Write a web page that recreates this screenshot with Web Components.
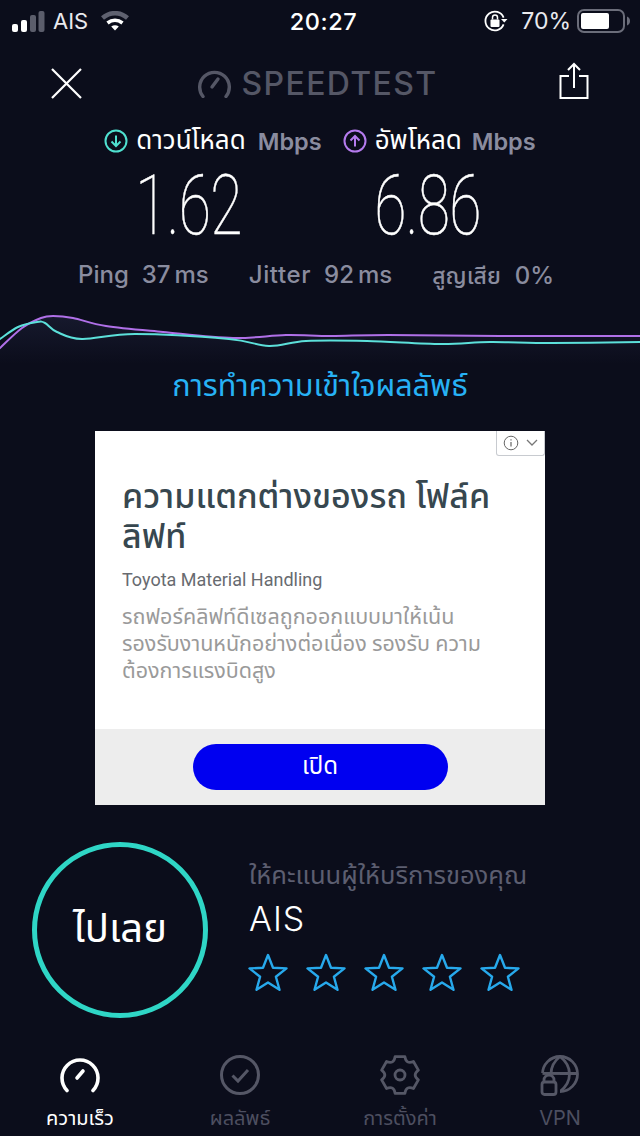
<!DOCTYPE html>
<html lang="th">
<head>
<meta charset="utf-8">
<title>Speedtest</title>
<style>
  html, body { margin: 0; padding: 0; background: #0b0d1b; }
  body { width: 640px; height: 1136px; overflow: hidden; font-family: Inter, "Noto Sans", "Noto Sans Thai", sans-serif; }
</style>
</head>
<body>
<speed-app>
  <status-bar></status-bar>
  <top-bar></top-bar>
  <speed-results></speed-results>
  <speed-graph></speed-graph>
  <result-link>การทำความเข้าใจผลลัพธ์</result-link>
  <ad-card></ad-card>
  <rate-panel></rate-panel>
  <tab-bar></tab-bar>
</speed-app>
<script>
const SANS = `Inter, "Noto Sans", "Noto Sans Thai", sans-serif`;

function define(name, html) {
  customElements.define(name, class extends HTMLElement {
    constructor() {
      super();
      this.attachShadow({ mode: "open" });
      this.shadowRoot.innerHTML = html;
    }
  });
}

// six lobes, concave valleys
function gearPath(cx, cy, r, valley) {
  const pt = (deg, rad) => {
    const a = deg * Math.PI / 180;
    return `${(cx + rad * Math.cos(a)).toFixed(2)} ${(cy + rad * Math.sin(a)).toFixed(2)}`;
  };
  let d = "";
  for (let i = 0; i < 6; i++) {
    const c = i * 60 - 90;
    d += `${i ? "L" : "M"}${pt(c - 15, r)} L${pt(c + 15, r)} Q${pt(c + 30, valley)} ${pt(c + 45, r)} `;
  }
  return d + "Z";
}

define("speed-app", `
  <style>:host { display: block; width: 640px; color: #fff; font-family: ${SANS}; }</style>
  <slot></slot>`);

define("status-bar", `
  <style>
    :host { display: grid; grid-template-columns: 1fr auto 1fr; align-items: center; height: 42px; padding: 0 10px 0 12px; font-size: 22px; color: #e9e9ee; }
    .l, .r { display: flex; align-items: center; }
    .r { justify-content: flex-end; }
    .t { margin-left: 5px; font-size: 23.5px; font-weight: 500; color: #fff; letter-spacing: .6px; }
    svg { display: block; }
  </style>
  <div class="l">
    <svg width="33" height="21" viewBox="0 0 33 21">
      <rect x="0" y="13" width="6" height="8" rx="2" fill="#fff"/>
      <rect x="9" y="9" width="6" height="12" rx="2" fill="#fff"/>
      <rect x="18" y="4" width="6" height="17" rx="2" fill="#5b5d6b"/>
      <rect x="26.500" y="0" width="6" height="21" rx="2" fill="#5b5d6b"/>
    </svg>
    <span style="margin-left:8px">AIS</span>
    <svg style="margin-left:13px" width="28" height="20" viewBox="0 0 28 20" fill="none">
      <path d="M1.500 7C9 .5 19 .5 26.500 7" stroke="#5f6170" stroke-width="4.500"/>
      <path d="M6.500 12C11 8.500 17 8.500 21.500 12" stroke="#fff" stroke-width="3.600"/>
      <path d="M14 19.500l-3.800-4C12.500 13.800 15.500 13.800 17.800 15.500z" fill="#fff"/>
    </svg>
  </div>
  <div class="t">20:27</div>
  <div class="r">
    <svg width="24" height="24" viewBox="0 0 24 24" fill="none">
      <path d="M19.600 15.400A9.400 9.400 0 1 1 19.600 8.600" stroke="#fff" stroke-width="1.800"/>
      <path d="M17 10h6.500l-3.200 3.500z" fill="#fff"/>
      <rect x="6.500" y="10.500" width="9" height="7.500" rx="1" fill="#fff"/>
      <path d="M8.500 10.500V8.500a2.500 2.500 0 0 1 5 0v2" stroke="#fff" stroke-width="1.500"/>
    </svg>
    <span style="margin-left:13px;font-size:23px">70%</span>
    <svg style="margin-left:6px" width="53" height="24" viewBox="0 0 53 24" fill="none">
      <rect x="1" y="1" width="46" height="22" rx="6" stroke="#6b6d7a" stroke-width="2"/>
      <rect x="4" y="4" width="28" height="16" rx="2" fill="#fff"/>
      <path d="M50 7.500c2 .8 3 2.400 3 4.500s-1 3.700-3 4.500z" fill="#6b6d7a"/>
    </svg>
  </div>`);

define("top-bar", `
  <style>
    :host { display: grid; grid-template-columns: 1fr auto 1fr; align-items: center; height: 74px; padding: 4px 51px 0 50px; }
    .logo { display: flex; align-items: center; gap: 11px; margin-left: -4px; color: #555766; font-size: 32px; font-weight: 500; letter-spacing: 1.35px; }
    svg { display: block; }
    .share { justify-self: end; margin-top: -4px; }
  </style>
  <svg width="32" height="32" viewBox="0 0 32 32" fill="none" stroke="#fff" stroke-width="2.200"><path d="M2 2L31 31M31 2L2 31"/></svg>
  <div class="logo">
    <svg width="33" height="30" viewBox="0 0 33 30" fill="none" stroke="#555766" stroke-width="3.400" stroke-linecap="round">
      <path d="M5 28.500A14.800 14.800 0 1 1 28 28.500"/><path d="M14 19l6-8"/>
    </svg>
    <span>SPEEDTEST</span>
  </div>
  <svg class="share" width="30" height="38" viewBox="0 0 30 38" fill="none" stroke="#fff" stroke-width="2">
    <path d="M15 26V2M9 8l6-6 6 6"/><path d="M10 14H1.500V36H28.500V14H20"/>
  </svg>`);

define("speed-results", `
  <style>
    :host { display: block; height: 180px; }
    .head { display: flex; justify-content: center; align-items: center; height: 42px; font-size: 26px; white-space: nowrap; }
    .head svg { margin-right: 8px; }
    .head span { color: #8a8c9f; font-weight: 600; margin: 0 21px 0 12px; font-size: 23.5px; }
    .head span:last-child { margin: 0 0 0 10px; }
    .cols { display: flex; padding-left: 69px; }
    .num { width: 239px; text-align: center; font-family: Roboto, sans-serif; font-weight: 100; font-size: 84px; line-height: 86px; height: 86px; margin-top: 1px; transform: scaleX(.7); -webkit-text-stroke: .5px #fff; color: #fff; letter-spacing: -1px; }
    .stats { display: flex; gap: 40px; padding-left: 78px; margin-top: 11px; font-size: 24px; color: #8a8c9f; font-weight: 500; white-space: nowrap; }
    .stats b { font-weight: 500; margin-left: 13px; }
    .stats i { font-style: normal; margin-left: 4px; }
    .stats .j { letter-spacing: .6px; }
    .stats .th { font-size: 23px; }
    .stats .th b { font-size: 24px; margin-left: 14px; }
    svg { display: block; }
  </style>
  <div class="head">
    <svg width="24" height="24" viewBox="0 0 24 24" fill="none" stroke="#4fe0d0" stroke-width="2"><circle cx="12" cy="12" r="10.500"/><path d="M12 6.500V17M7.500 12.500L12 17l4.500-4.500"/></svg>ดาวน์โหลด<span>Mbps</span>
    <svg width="24" height="24" viewBox="0 0 24 24" fill="none" stroke="#b57bee" stroke-width="2"><circle cx="12" cy="12" r="10.500"/><path d="M12 17.500V7M7.500 11.500L12 7l4.500 4.500"/></svg>อัพโหลด<span>Mbps</span>
  </div>
  <div class="cols">
    <div class="num">1.62</div>
    <div class="num">6.86</div>
  </div>
  <div class="stats">
    <div>Ping<b>37</b><i>ms</i></div>
    <div><span class="j">Jitter</span><b>92</b><i>ms</i></div>
    <div class="th">สูญเสีย<b>0%</b></div>
  </div>`);

customElements.define("speed-graph", class extends HTMLElement {
  constructor() {
    super();
    this.attachShadow({ mode: "open" });
    const purple = [[-5,353],[0,348],[22,328],[41,318],[53,316],[73,318],[106,326],[163,332],[233,338],[286,335],[331,336],[388,335],[500,336],[640,336]];
    const teal = [[-5,342],[0,339],[18,327],[37,322],[45,323],[57,332],[82,339],[135,334],[229,339],[269,346],[306,341],[367,341],[441,344],[490,342],[551,343],[640,342]];
    const off = 300;
    this.shadowRoot.innerHTML = `
      <style>
        :host { display: block; height: 64px; }
        svg { display: block; }
      </style>
      <svg width="640" height="64" viewBox="0 ${off} 640 64" fill="none">
        <defs>
          <linearGradient id="g" x1="0" y1="0" x2="0" y2="1">
            <stop offset="0" stop-color="#1a1d33" stop-opacity=".75"/>
            <stop offset="1" stop-color="#1a1d33" stop-opacity="0"/>
          </linearGradient>
        </defs>
        <path d="${this.smooth(purple)} L640 364 L0 364Z" fill="url(#g)"/>
        <path d="${this.smooth(purple)}" stroke="#b070e8" stroke-width="2"/>
        <path d="${this.smooth(teal)}" stroke="#5ce0da" stroke-width="2"/>
      </svg>`;
  }

  // catmull-rom through the sampled points
  smooth(p) {
    let d = `M${p[0][0]} ${p[0][1]}`;
    for (let i = 0; i < p.length - 1; i++) {
      const a = p[i - 1] || p[i], b = p[i], c = p[i + 1], e = p[i + 2] || c;
      const c1 = [b[0] + (c[0] - a[0]) / 6, b[1] + (c[1] - a[1]) / 6];
      const c2 = [c[0] - (e[0] - b[0]) / 6, c[1] - (e[1] - b[1]) / 6];
      d += ` C${c1[0]} ${c1[1]} ${c2[0]} ${c2[1]} ${c[0]} ${c[1]}`;
    }
    return d;
  }
});

define("result-link", `
  <style>:host { display: block; height: 67px; line-height: 41px; text-align: center; font-size: 30.500px; color: #27b2f5; white-space: nowrap; }</style>
  <slot></slot>`);

define("ad-card", `
  <style>
    :host { display: flex; flex-direction: column; position: relative; width: 450px; height: 374px; margin: 0 auto 37px; background: #fff; font-family: Roboto, "Noto Sans", "Noto Sans Thai", sans-serif; }
    .body { flex: 1; padding: 45px 27px 0; }
    h2 { margin: 0; font-size: 34px; line-height: 40px; font-weight: 500; color: #37474f; white-space: nowrap; }
    .by { margin-top: 12px; font-size: 18px; line-height: 24px; color: #686b70; }
    p { margin: 11px 0 0; font-size: 21.500px; line-height: 27px; color: #9a9a9a; white-space: nowrap; }
    .foot { display: flex; justify-content: center; align-items: center; height: 76px; background: #ededed; }
    .btn { display: flex; align-items: center; justify-content: center; width: 255px; height: 46px; border-radius: 23px; background: #0000f0; color: #fff; font-size: 24px; }
    .info { position: absolute; top: 0; right: 0; display: flex; align-items: center; gap: 7px; box-sizing: border-box; width: 49px; height: 25px; padding-left: 6px; border: 1px solid #c8cbd0; border-top: 0; border-radius: 0 0 3px 3px; background: #fff; }
    svg { display: block; }
  </style>
  <div class="body">
    <h2>ความแตกต่างของรถ โฟล์ค<br>ลิฟท์</h2>
    <div class="by">Toyota Material Handling</div>
    <p>รถฟอร์คลิฟท์ดีเซลถูกออกแบบมาให้เน้น<br>รองรับงานหนักอย่างต่อเนื่อง รองรับ ความ<br>ต้องการแรงบิดสูง</p>
  </div>
  <div class="foot"><div class="btn">เปิด</div></div>
  <div class="info">
    <svg width="16" height="16" viewBox="0 0 16 16" fill="none" stroke="#666"><circle cx="8" cy="8" r="6.800"/><path d="M8 7v4.500M8 4.300v1.200" stroke-width="1.200"/></svg>
    <svg width="12" height="8" viewBox="0 0 12 8" fill="none" stroke="#777" stroke-width="1.300"><path d="M1 1l5 5 5-5"/></svg>
  </div>`);

define("rate-panel", `
  <style>
    :host { display: grid; grid-template-columns: 176px 1fr; column-gap: 41px; height: 176px; padding-left: 32px; align-items: start; }
    .go { box-sizing: border-box; width: 176px; height: 176px; border: 5px solid #2fd6c6; border-radius: 50%; display: flex; align-items: center; justify-content: center; font-size: 40px; color: #fff; }
    .title { margin-top: 17px; font-size: 25.500px; line-height: 32px; color: #5c5e70; white-space: nowrap; }
    .isp { margin-top: 8px; font-size: 34px; line-height: 40px; color: #fff; font-weight: 300; letter-spacing: 1px; }
    .stars { display: flex; gap: 18px; margin-top: 14px; margin-left: -1px; }
    svg { display: block; }
  </style>
  <div class="go">ไปเลย</div>
  <div>
    <div class="title">ให้คะแนนผู้ให้บริการของคุณ</div>
    <div class="isp">AIS</div>
    <div class="stars">${`<svg width="40" height="38" viewBox="0 0 40 38" fill="none" stroke="#27a9ec" stroke-width="2.400" stroke-linejoin="round"><path d="M20 2l5 12.800 13.500.6-10.600 8.400 3.600 13-11.500-7.400-11.500 7.400 3.600-13L1.500 15.400l13.500-.6z"/></svg>`.repeat(5)}</div>
  </div>`);

define("tab-bar", `
  <style>
    :host { display: grid; grid-template-columns: repeat(4, 160px); margin-top: 35px; height: 83px; font-size: 20px; color: #4d4f60; text-align: center; }
    .tab { display: flex; flex-direction: column; align-items: center; white-space: nowrap; }
    .tab.on { color: #fff; }
    .ic { height: 44px; display: flex; align-items: center; }
    .lb { margin-top: 8px; line-height: 26px; }
    svg { display: block; }
  </style>
  <div class="tab on">
    <div class="ic"><svg width="40" height="36" viewBox="0 0 40 36" fill="none" stroke="#fff" stroke-width="3.600" stroke-linecap="round"><path d="M7 33.500A18 18 0 1 1 33 33.500"/><path d="M17 21l6-7"/></svg></div>
    <div class="lb">ความเร็ว</div>
  </div>
  <div class="tab">
    <div class="ic"><svg width="40" height="40" viewBox="0 0 40 40" fill="none" stroke="#555766" stroke-width="3"><circle cx="20" cy="20" r="18.500"/><path d="M12.500 20.500l5.500 5.500 10-11"/></svg></div>
    <div class="lb">ผลลัพธ์</div>
  </div>
  <div class="tab">
    <div class="ic"><svg width="40" height="42" viewBox="0 0 40 42" fill="none" stroke="#555766" stroke-width="2.800" stroke-linejoin="round"><path d="${gearPath(20, 21, 19, 12)}"/><circle cx="20" cy="21" r="5"/></svg></div>
    <div class="lb">การตั้งค่า</div>
  </div>
  <div class="tab">
    <div class="ic"><svg width="40" height="42" viewBox="0 0 40 42" fill="none" stroke="#555766" stroke-width="2.800"><circle cx="20" cy="20" r="17.500"/><path d="M2.500 19.500H37.500M20 2.500C13 8 11 14 11 20M20 2.500C27 8 29.500 14 29.500 20C29.500 27 26 33 20 37.500"/><rect x="-2" y="19" width="22" height="24" fill="#0b0d1b" stroke="none"/><path d="M2.500 19.500H20" /><path d="M4 27V26a5 5 0 0 1 10 0v1"/><rect x="2" y="28" width="14" height="12.500" rx="2.500"/></svg></div>
    <div class="lb">VPN</div>
  </div>`);
</script>
</body>
</html>
